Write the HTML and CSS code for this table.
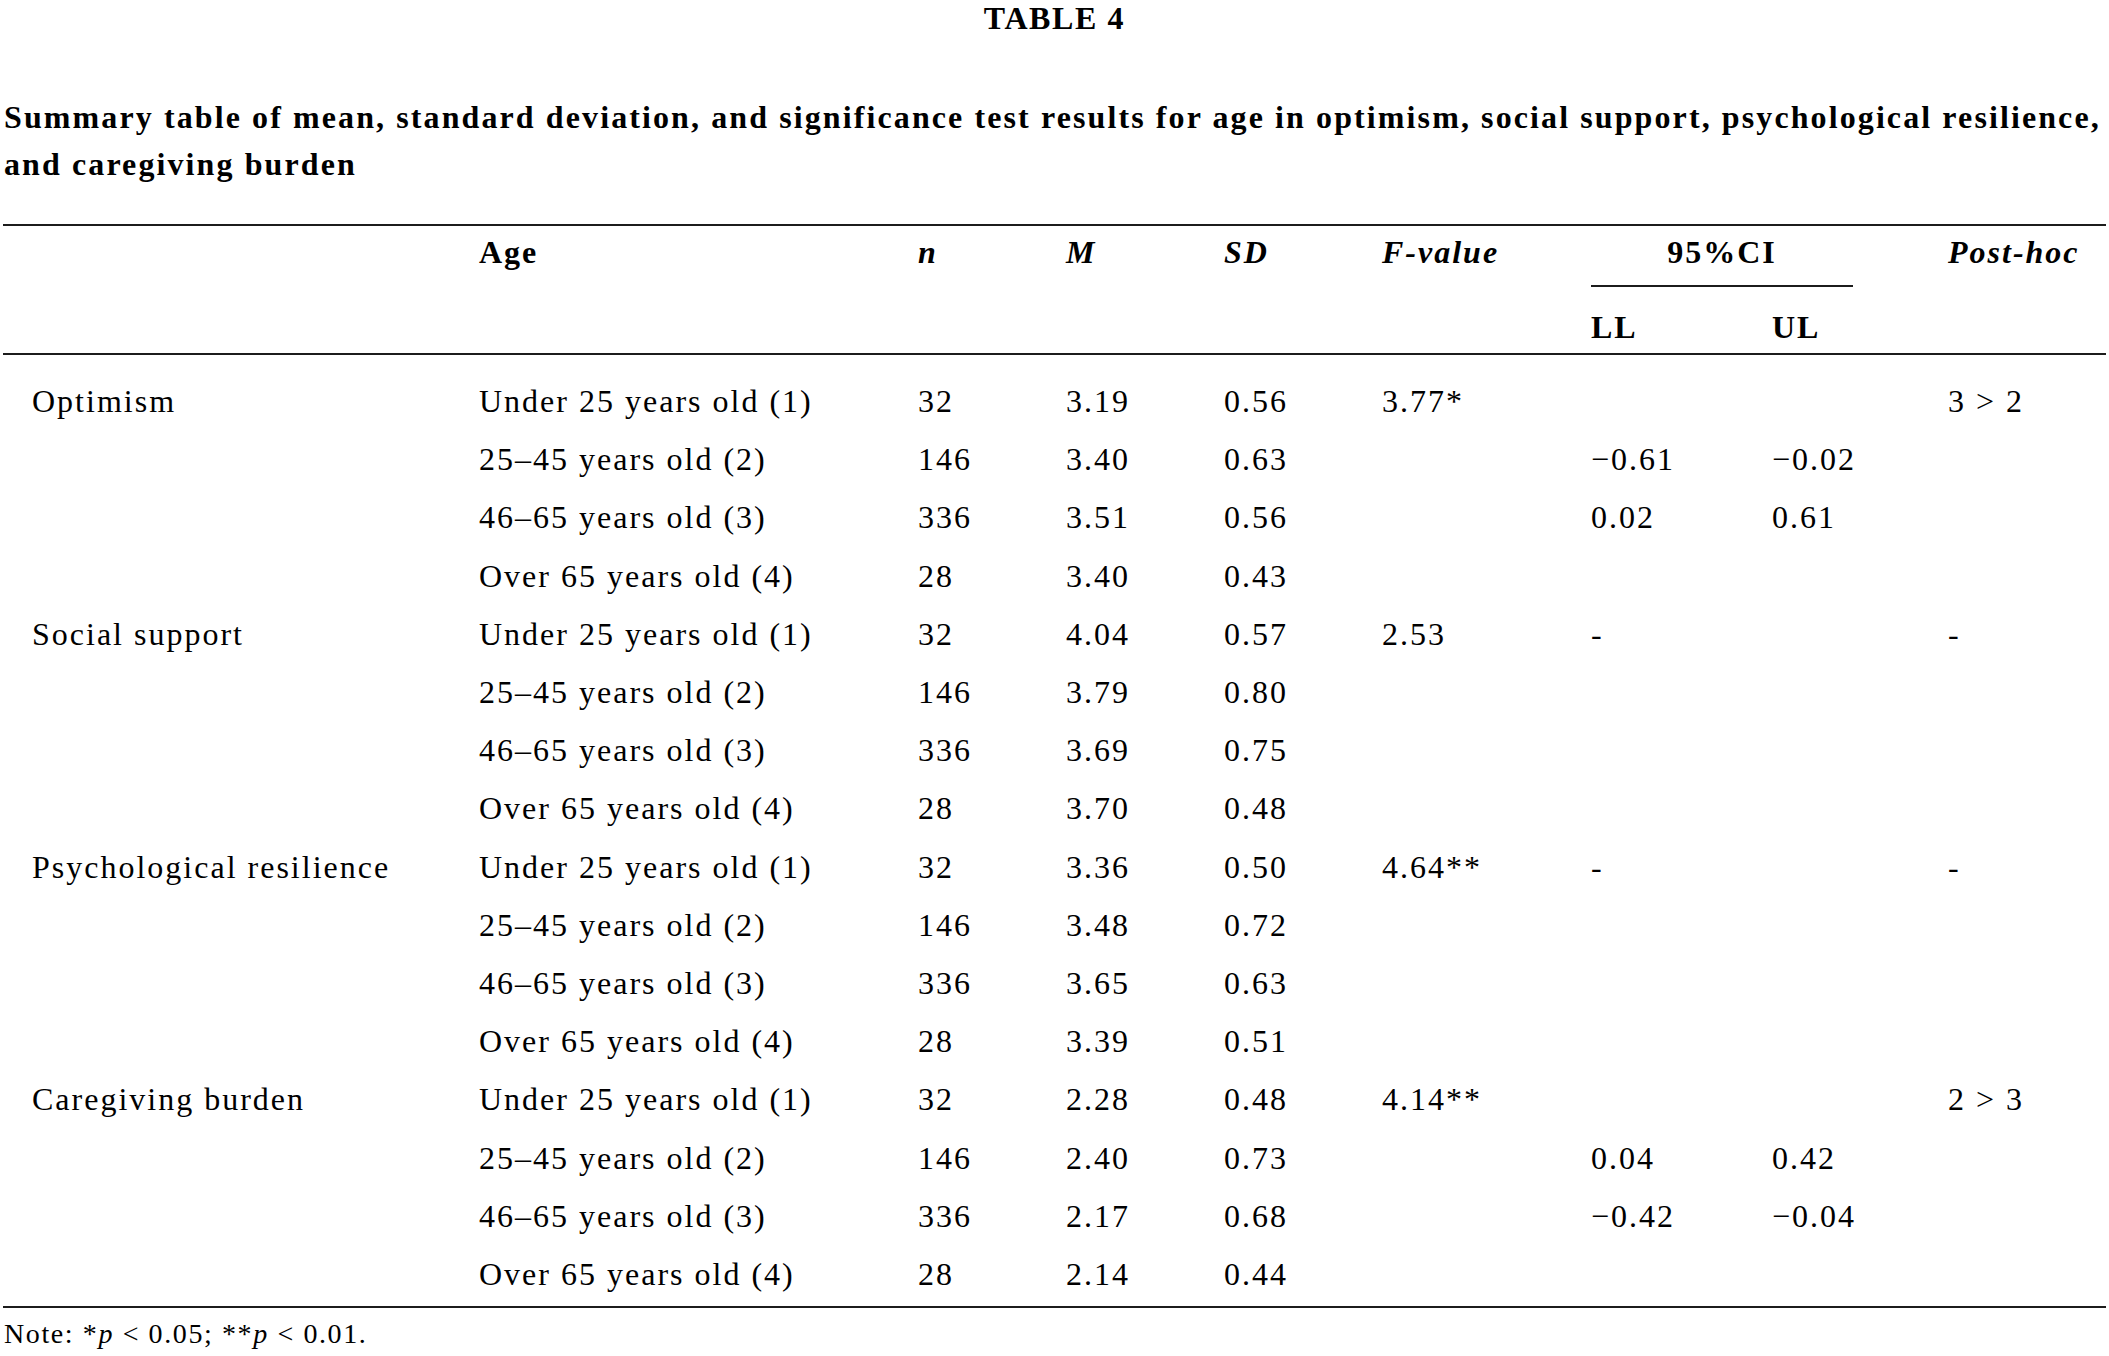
FILE: index.html
```html
<!DOCTYPE html>
<html lang="en">
<head>
<meta charset="utf-8">
<title>Table 4</title>
<link rel="stylesheet" href="styles.css">
</head>
<body>
<div class="page">
  <h1 class="table-label">TABLE 4</h1>
  <p class="caption">Summary table of mean, standard deviation, and significance test results for age in optimism, social support, psychological resilience,<br>and caregiving burden</p>
  <table class="data">
    <colgroup>
      <col class="c-var"><col class="c-age"><col class="c-n"><col class="c-m"><col class="c-sd"><col class="c-f"><col class="c-ll"><col class="c-ul"><col class="c-post">
    </colgroup>
    <thead>
      <tr>
        <th rowspan="2" class="h first"></th>
        <th rowspan="2" class="h">Age</th>
        <th rowspan="2" class="h it">n</th>
        <th rowspan="2" class="h it">M</th>
        <th rowspan="2" class="h it">SD</th>
        <th rowspan="2" class="h it">F-value</th>
        <th colspan="2" class="h ci"><div class="ci-label">95%CI</div></th>
        <th rowspan="2" class="h it">Post-hoc</th>
      </tr>
      <tr>
        <th class="h sub">LL</th>
        <th class="h sub">UL</th>
      </tr>
    </thead>
    <tbody>
      <tr class="top"><td class="first">Optimism</td><td>Under 25 years old (1)</td><td>32</td><td>3.19</td><td>0.56</td><td>3.77*</td><td></td><td></td><td>3 &gt; 2</td></tr>
      <tr><td class="first"></td><td>25–45 years old (2)</td><td>146</td><td>3.40</td><td>0.63</td><td></td><td>−0.61</td><td>−0.02</td><td></td></tr>
      <tr><td class="first"></td><td>46–65 years old (3)</td><td>336</td><td>3.51</td><td>0.56</td><td></td><td>0.02</td><td>0.61</td><td></td></tr>
      <tr><td class="first"></td><td>Over 65 years old (4)</td><td>28</td><td>3.40</td><td>0.43</td><td></td><td></td><td></td><td></td></tr>
      <tr><td class="first">Social support</td><td>Under 25 years old (1)</td><td>32</td><td>4.04</td><td>0.57</td><td>2.53</td><td>-</td><td></td><td>-</td></tr>
      <tr><td class="first"></td><td>25–45 years old (2)</td><td>146</td><td>3.79</td><td>0.80</td><td></td><td></td><td></td><td></td></tr>
      <tr><td class="first"></td><td>46–65 years old (3)</td><td>336</td><td>3.69</td><td>0.75</td><td></td><td></td><td></td><td></td></tr>
      <tr><td class="first"></td><td>Over 65 years old (4)</td><td>28</td><td>3.70</td><td>0.48</td><td></td><td></td><td></td><td></td></tr>
      <tr><td class="first">Psychological resilience</td><td>Under 25 years old (1)</td><td>32</td><td>3.36</td><td>0.50</td><td>4.64**</td><td>-</td><td></td><td>-</td></tr>
      <tr><td class="first"></td><td>25–45 years old (2)</td><td>146</td><td>3.48</td><td>0.72</td><td></td><td></td><td></td><td></td></tr>
      <tr><td class="first"></td><td>46–65 years old (3)</td><td>336</td><td>3.65</td><td>0.63</td><td></td><td></td><td></td><td></td></tr>
      <tr><td class="first"></td><td>Over 65 years old (4)</td><td>28</td><td>3.39</td><td>0.51</td><td></td><td></td><td></td><td></td></tr>
      <tr><td class="first">Caregiving burden</td><td>Under 25 years old (1)</td><td>32</td><td>2.28</td><td>0.48</td><td>4.14**</td><td></td><td></td><td>2 &gt; 3</td></tr>
      <tr><td class="first"></td><td>25–45 years old (2)</td><td>146</td><td>2.40</td><td>0.73</td><td></td><td>0.04</td><td>0.42</td><td></td></tr>
      <tr><td class="first"></td><td>46–65 years old (3)</td><td>336</td><td>2.17</td><td>0.68</td><td></td><td>−0.42</td><td>−0.04</td><td></td></tr>
      <tr class="bottom"><td class="first"></td><td>Over 65 years old (4)</td><td>28</td><td>2.14</td><td>0.44</td><td></td><td></td><td></td><td></td></tr>
    </tbody>
  </table>
  <p class="note">Note: *<i>p</i> &lt; 0.05; **<i>p</i> &lt; 0.01.</p>
</div>
</body>
</html>
```
FILE: styles.css
```css
html, body {
  margin: 0;
  padding: 0;
  background: #ffffff;
}

body {
  font-family: "Liberation Serif", "Times New Roman", serif;
  color: #000000;
}

.page {
  width: 2103px;
  padding: 0 0 0 3px;
}

.table-label {
  margin: 0;
  font-size: 32px;
  line-height: 36px;
  font-weight: bold;
  text-align: center;
  letter-spacing: 1.6px;
}

.caption {
  margin: 58px 0 0 1px;
  font-size: 32px;
  line-height: 47px;
  font-weight: bold;
  letter-spacing: 2.1px;
  white-space: nowrap;
}

.data {
  margin-top: 36px;
  width: 2103px;
  table-layout: fixed;
  border-collapse: separate;
  border-spacing: 0;
  border-top: 2px solid #1c1c1c;
  border-bottom: 2px solid #1c1c1c;
  font-size: 32px;
  letter-spacing: 2px;
}

.c-var { width: 476px; }
.c-age { width: 439px; }
.c-n { width: 148px; }
.c-m { width: 158px; }
.c-sd { width: 158px; }
.c-f { width: 209px; }
.c-ll { width: 181px; }
.c-ul { width: 176px; }
.c-post { width: 158px; }

.data th,
.data td {
  padding: 0;
  text-align: left;
  white-space: nowrap;
}

.data th {
  font-weight: bold;
  vertical-align: top;
  line-height: 40px;
  padding-top: 6px;
  border-bottom: 2px solid #1c1c1c;
}

.data th.it {
  font-style: italic;
}

.data th.ci {
  border-bottom: none;
  padding-top: 6px;
}

.ci-label {
  width: 262px;
  text-align: center;
  padding-bottom: 13px;
  border-bottom: 2px solid #1c1c1c;
}

.data th.sub {
  padding-top: 20px;
  padding-bottom: 6px;
}

.data td {
  line-height: 58.2px;
  vertical-align: top;
}

.data .first {
  padding-left: 29px;
}

.data tr.top td {
  padding-top: 17px;
}

.data tr.bottom td {
  padding-bottom: 3px;
}

.note {
  margin: 8px 0 0 1px;
  font-size: 28px;
  line-height: 36px;
  letter-spacing: 1.6px;
}
```
